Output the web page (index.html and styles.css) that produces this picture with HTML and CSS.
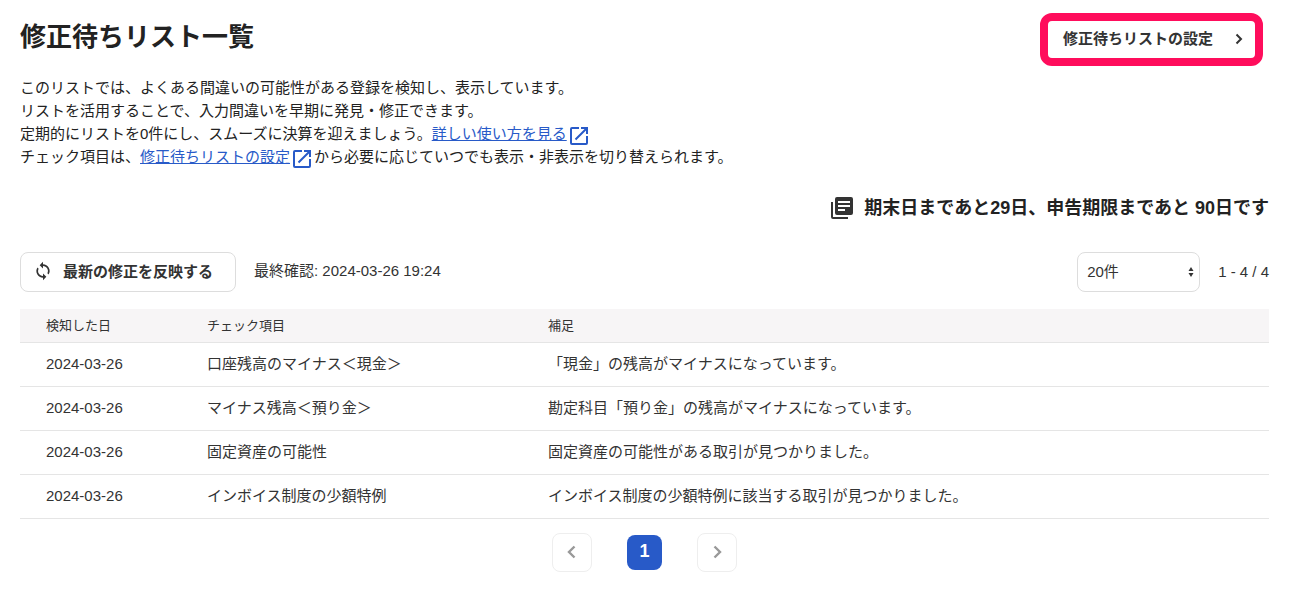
FILE: index.html
```html
<!DOCTYPE html>
<html lang="ja">
<head>
  <meta charset="UTF-8">
  <meta name="viewport" content="width=device-width, initial-scale=1">
  <title>修正待ちリスト一覧</title>
  <link rel="stylesheet" href="styles.css">
</head>
<body>

  <main class="page">
    <header class="page-header">
      <h1>修正待ちリスト一覧</h1>
      <a class="settings-link" href="#settings">
        修正待ちリストの設定
        <svg class="icon" viewBox="0 0 20 20" aria-hidden="true"><path d="M7.5 5.5L12 10l-4.500 4.500" fill="none" stroke="currentColor" stroke-width="2"/></svg>
      </a>
    </header>

    <p class="description">
      このリストでは、よくある間違いの可能性がある登録を検知し、表示しています。<br>
      リストを活用することで、入力間違いを早期に発見・修正できます。<br>
      定期的にリストを0件にし、スムーズに決算を迎えましょう。<a href="#help">詳しい使い方を見る<svg class="external" viewBox="3 3 18 18" aria-hidden="true"><path d="M19 19H5V5h7V3H5a2 2 0 0 0-2 2v14a2 2 0 0 0 2 2h14a2 2 0 0 0 2-2v-7h-2v7zM14 3v2h3.6l-9.8 9.8 1.4 1.4L19 6.4V10h2V3h-7z"/></svg></a><br>
      チェック項目は、<a href="#settings">修正待ちリストの設定<svg class="external" viewBox="3 3 18 18" aria-hidden="true"><path d="M19 19H5V5h7V3H5a2 2 0 0 0-2 2v14a2 2 0 0 0 2 2h14a2 2 0 0 0 2-2v-7h-2v7zM14 3v2h3.6l-9.8 9.8 1.4 1.4L19 6.4V10h2V3h-7z"/></svg></a>から必要に応じていつでも表示・非表示を切り替えられます。
    </p>

    <p class="deadline">
      <svg viewBox="0 0 24 24" aria-hidden="true"><path d="M3 6H1v15a2 2 0 0 0 2 2h15v-2H3z"/><path fill-rule="evenodd" d="M7 1h14a2 2 0 0 1 2 2v14a2 2 0 0 1-2 2H7a2 2 0 0 1-2-2V3a2 2 0 0 1 2-2zM8 5v2h12V5zM8 9v2h12V9zM8 13v2h7v-2z"/></svg>
      期末日まであと29日、申告期限まであと 90日です
    </p>

    <div class="toolbar">
      <button class="refresh-btn" type="button">
        <svg class="icon" viewBox="0 0 24 24" aria-hidden="true"><path fill="currentColor" d="M12 4V1L8 5l4 4V6a6 6 0 0 1 5.24 8.8l1.46 1.46A8 8 0 0 0 12 4zm0 14a6 6 0 0 1-5.24-8.8L5.3 7.74A8 8 0 0 0 12 20v3l4-4-4-4v3z"/></svg>
        最新の修正を反映する
      </button>
      <span class="last-checked">最終確認: 2024-03-26 19:24</span>
      <div class="per-page">
        <select id="perPage" aria-label="表示件数">
          <option>20件</option>
          <option>50件</option>
          <option>100件</option>
        </select>
        <svg viewBox="0 0 6 10" aria-hidden="true"><path d="M3 0l2.500 4h-5zM3 10L.5 6h5z"/></svg>
      </div>
      <span class="range">1 - 4 / 4</span>
    </div>

    <table class="list">
      <thead>
        <tr>
          <th class="col-date" scope="col">検知した日</th>
          <th class="col-check" scope="col">チェック項目</th>
          <th scope="col">補足</th>
        </tr>
      </thead>
      <tbody>
        <tr>
          <td>2024-03-26</td>
          <td>口座残高のマイナス＜現金＞</td>
          <td>「現金」の残高がマイナスになっています。</td>
        </tr>
        <tr>
          <td>2024-03-26</td>
          <td>マイナス残高＜預り金＞</td>
          <td>勘定科目「預り金」の残高がマイナスになっています。</td>
        </tr>
        <tr>
          <td>2024-03-26</td>
          <td>固定資産の可能性</td>
          <td>固定資産の可能性がある取引が見つかりました。</td>
        </tr>
        <tr>
          <td>2024-03-26</td>
          <td>インボイス制度の少額特例</td>
          <td>インボイス制度の少額特例に該当する取引が見つかりました。</td>
        </tr>
      </tbody>
    </table>

    <nav class="pagination" aria-label="ページ">
      <button class="page-arrow" type="button" aria-label="前へ" disabled>
        <svg class="icon" viewBox="0 0 20 20" aria-hidden="true"><path d="M12.5 4.500L7 10l5.500 5.500" fill="none" stroke="currentColor" stroke-width="2.400"/></svg>
      </button>
      <button class="page-number" type="button" aria-current="page">1</button>
      <button class="page-arrow" type="button" aria-label="次へ" disabled>
        <svg class="icon" viewBox="0 0 20 20" aria-hidden="true"><path d="M7.500 4.500L13 10l-5.500 5.500" fill="none" stroke="currentColor" stroke-width="2.400"/></svg>
      </button>
    </nav>
  </main>

</body>
</html>
```
FILE: styles.css
```css
* {
  margin: 0;
  padding: 0;
  box-sizing: border-box;
}

body {
  font-family: "Liberation Sans", "Noto Sans CJK JP", sans-serif;
  font-size: 15px;
  line-height: 23px;
  color: #222;
  background: #fff;
}

button,
select {
  font: inherit;
  color: inherit;
  background: #fff;
  border: 1px solid #ddd;
  border-radius: 8px;
}

.page {
  padding: 13px 22px 30px 20px;
}

.icon {
  width: 20px;
  height: 20px;
  flex: none;
}

.page-header {
  display: flex;
  justify-content: space-between;
  align-items: flex-start;
}

h1 {
  font-size: 26px;
  line-height: 48px;
}

.settings-link {
  display: flex;
  align-items: center;
  gap: 16px;
  margin-right: 6px;
  padding: 6px 6px 8px 15px;
  border: 8px solid #ff0d5c;
  border-radius: 12px;
  color: #333;
  font-weight: bold;
  text-decoration: none;
}

.description {
  margin-top: 10px;
}

.description a {
  color: #285ac8;
}

.external {
  width: 18px;
  height: 18px;
  margin: 0 3px -6px;
  vertical-align: baseline;
  fill: #285ac8;
}

.deadline {
  display: flex;
  justify-content: flex-end;
  align-items: center;
  gap: 10px;
  margin-top: 28px;
  font-size: 18px;
  font-weight: bold;
  line-height: 24px;
}

.deadline svg {
  width: 24px;
  height: 24px;
  fill: #333;
}

.toolbar {
  display: flex;
  align-items: center;
  margin-top: 32px;
  color: #333;
}

.refresh-btn {
  display: flex;
  align-items: center;
  gap: 10px;
  height: 40px;
  padding: 0 22px 2px 12px;
  font-weight: bold;
  cursor: pointer;
}

.last-checked {
  margin-left: 18px;
  padding-bottom: 4px;
}

.per-page {
  position: relative;
  margin-left: auto;
}

.per-page select {
  display: block;
  width: 123px;
  height: 40px;
  padding: 0 9px 2px;
  appearance: none;
}

.per-page svg {
  position: absolute;
  top: 15px;
  right: 6px;
  width: 6px;
  height: 10px;
  fill: #333;
  pointer-events: none;
}

.range {
  margin-left: 18px;
  padding-bottom: 2px;
}

.list {
  width: 100%;
  margin-top: 17px;
  border-collapse: collapse;
  table-layout: fixed;
  color: #333;
}

.list th,
.list td {
  border-bottom: 1px solid #e5e5e5;
  text-align: left;
}

.list th {
  height: 33px;
  background: #f7f5f6;
  font-size: 13px;
  font-weight: normal;
}

.list td {
  height: 44px;
  padding-bottom: 2px;
}

.list th:first-child,
.list td:first-child {
  padding-left: 26px;
}

.col-date {
  width: 187px;
}

.col-check {
  width: 341px;
}

.pagination {
  display: flex;
  justify-content: center;
  align-items: center;
  gap: 35px;
  margin-top: 14px;
}

.page-arrow {
  display: flex;
  justify-content: center;
  align-items: center;
  width: 40px;
  height: 39px;
  border-color: #eee;
  color: #999;
}

.page-number {
  width: 35px;
  height: 35px;
  padding-bottom: 2px;
  border: none;
  background: #285ac8;
  color: #fff;
  font-size: 18px;
  font-weight: bold;
}
```
